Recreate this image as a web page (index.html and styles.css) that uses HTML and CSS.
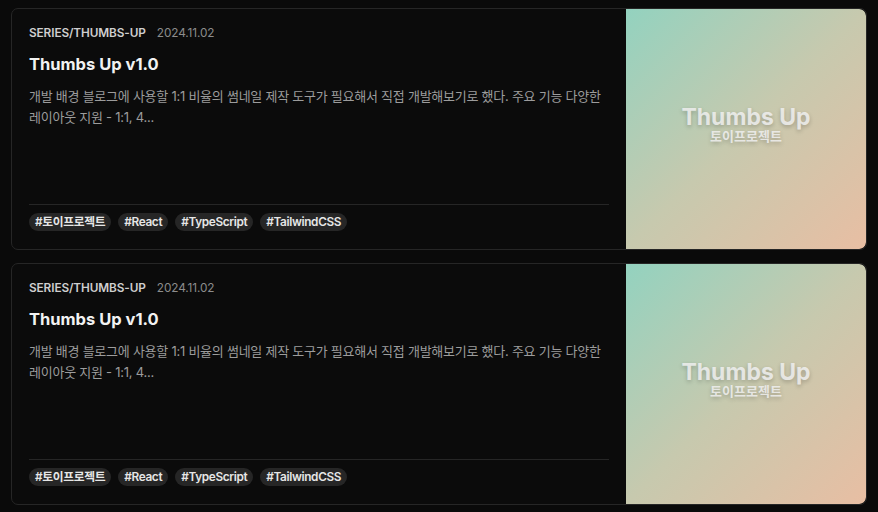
FILE: index.html
```html
<!DOCTYPE html>
<html lang="ko">
<head>
  <meta charset="UTF-8" />
  <meta name="viewport" content="width=device-width, initial-scale=1.0"/>
  <title>Posts</title>
  <link rel="stylesheet" href="styles.css">
</head>
<body>
  <main class="post-list">
    <article class="post-card">
      <div class="post-body">
        <div class="post-meta">
          <span class="post-series">SERIES/THUMBS-UP</span>
          <span class="post-date">2024.11.02</span>
        </div>
        <h2 class="post-title">Thumbs Up v1.0</h2>
        <p class="post-desc">개발 배경 블로그에 사용할 1:1 비율의 썸네일 제작 도구가 필요해서 직접 개발해보기로 했다. 주요 기능 다양한 레이아웃 지원 - 1:1, 4...</p>
        <div class="post-tags">
          <span class="tag">#토이프로젝트</span>
          <span class="tag">#React</span>
          <span class="tag">#TypeScript</span>
          <span class="tag">#TailwindCSS</span>
        </div>
      </div>
      <div class="post-thumb">
        <strong>Thumbs Up</strong>
        <span>토이프로젝트</span>
      </div>
    </article>

    <article class="post-card">
      <div class="post-body">
        <div class="post-meta">
          <span class="post-series">SERIES/THUMBS-UP</span>
          <span class="post-date">2024.11.02</span>
        </div>
        <h2 class="post-title">Thumbs Up v1.0</h2>
        <p class="post-desc">개발 배경 블로그에 사용할 1:1 비율의 썸네일 제작 도구가 필요해서 직접 개발해보기로 했다. 주요 기능 다양한 레이아웃 지원 - 1:1, 4...</p>
        <div class="post-tags">
          <span class="tag">#토이프로젝트</span>
          <span class="tag">#React</span>
          <span class="tag">#TypeScript</span>
          <span class="tag">#TailwindCSS</span>
        </div>
      </div>
      <div class="post-thumb">
        <strong>Thumbs Up</strong>
        <span>토이프로젝트</span>
      </div>
    </article>
  </main>
</body>
</html>
```

FILE: styles.css
```css
body {
  margin: 0;
  background-color: #0a0a0a;
  font-family: Inter, "Noto Sans CJK KR", sans-serif;
  color: #e8e8e8;
}

.post-list {
  display: flex;
  flex-direction: column;
  gap: 13px;
  padding: 8px 11px 8px 11px;
}

.post-card {
  display: flex;
  height: 240px;
  background-color: #0b0b0b;
  border: 1px solid #262626;
  border-radius: 7px;
  overflow: hidden;
}

.post-body {
  flex: 1;
  display: flex;
  flex-direction: column;
  padding: 16px 17px 18px 17px;
  min-width: 0;
}

.post-meta {
  display: flex;
  align-items: center;
  gap: 11px;
  font-size: 11.8px;
  line-height: 16px;
}

.post-series {
  font-weight: 600;
  color: #cfcfcf;
  letter-spacing: -0.1px;
}

.post-date {
  color: #8c8c8c;
  letter-spacing: -0.1px;
}

.post-title {
  margin: 11px 0 0;
  font-size: 16.5px;
  line-height: 24px;
  font-weight: 700;
  color: #f2f2f2;
}

.post-desc {
  margin: 10px 0 0;
  font-size: 13px;
  line-height: 21px;
  letter-spacing: -0.25px;
  color: #9c9c9c;
}

.post-tags {
  margin-top: auto;
  display: flex;
  gap: 7px;
  padding-top: 8px;
  border-top: 1px solid #262626;
}

.tag {
  padding: 1px 6px;
  font-size: 11.8px;
  line-height: 16px;
  font-weight: 600;
  letter-spacing: -0.35px;
  color: #e6e6e6;
  background-color: #262626;
  border-radius: 999px;
}

.post-thumb {
  flex: 0 0 240px;
  display: flex;
  flex-direction: column;
  align-items: center;
  justify-content: center;
  padding-bottom: 12px;
  background: linear-gradient(135deg, #93d2bf 0%, #c7c9ae 50%, #e8bea3 100%);
  color: rgba(240, 240, 240, 0.85);
  text-shadow: 0 2px 4px rgba(0, 0, 0, 0.22);
  border-radius: 0 7px 7px 0;
}

.post-thumb strong {
  font-size: 23px;
  line-height: 26px;
  font-weight: 700;
}

.post-thumb span {
  font-size: 13px;
  line-height: 12px;
  font-weight: 700;
}
```
